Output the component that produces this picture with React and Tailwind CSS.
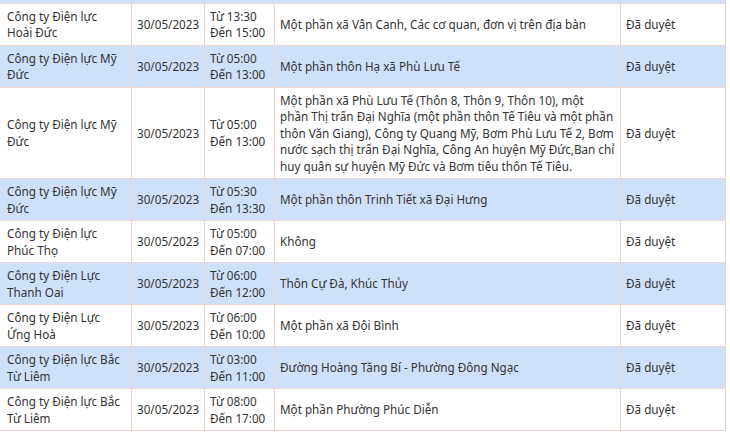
import React from "react";

const rows = [
  {
    unit: ["Công ty Điện lực", "Hoài Đức"],
    time: ["Từ 13:30", "Đến 15:00"],
    area: ["Một phần xã Vân Canh, Các cơ quan, đơn vị trên địa bàn"],
  },
  {
    unit: ["Công ty Điện lực Mỹ", "Đức"],
    time: ["Từ 05:00", "Đến 13:00"],
    area: ["Một phần thôn Hạ xã Phù Lưu Tế"],
  },
  {
    unit: ["Công ty Điện lực Mỹ", "Đức"],
    time: ["Từ 05:00", "Đến 13:00"],
    area: [
      "Một phần xã Phù Lưu Tế (Thôn 8, Thôn 9, Thôn 10), một",
      "phần Thị trấn Đại Nghĩa (một phần thôn Tế Tiêu và một phần",
      "thôn Văn Giang), Công ty Quang Mỹ, Bơm Phù Lưu Tế 2, Bơm",
      "nước sạch thị trấn Đại Nghĩa, Công An huyện Mỹ Đức,Ban chỉ",
      "huy quân sự huyện Mỹ Đức và Bơm tiêu thôn Tế Tiêu.",
    ],
  },
  {
    unit: ["Công ty Điện lực Mỹ", "Đức"],
    time: ["Từ 05:30", "Đến 13:30"],
    area: ["Một phần thôn Trinh Tiết xã Đại Hưng"],
  },
  {
    unit: ["Công ty Điện lực", "Phúc Thọ"],
    time: ["Từ 05:00", "Đến 07:00"],
    area: ["Không"],
  },
  {
    unit: ["Công ty Điện Lực", "Thanh Oai"],
    time: ["Từ 06:00", "Đến 12:00"],
    area: ["Thôn Cự Đà, Khúc Thủy"],
  },
  {
    unit: ["Công ty Điện Lực", "Ứng Hoà"],
    time: ["Từ 06:00", "Đến 10:00"],
    area: ["Một phần xã Đội Bình"],
  },
  {
    unit: ["Công ty Điện lực Bắc", "Từ Liêm"],
    time: ["Từ 03:00", "Đến 11:00"],
    area: ["Đường Hoàng Tăng Bí - Phường Đông Ngạc"],
  },
  {
    unit: ["Công ty Điện lực Bắc", "Từ Liêm"],
    time: ["Từ 08:00", "Đến 17:00"],
    area: ["Một phần Phường Phúc Diễn"],
  },
];

const td = "border border-[#ead6cf] px-[5px] py-[4px] align-middle whitespace-nowrap";

function Lines({ items }) {
  return items.map((line, j) => (
    <React.Fragment key={j}>
      {j > 0 && <br />}
      {line}
    </React.Fragment>
  ));
}

export default function App() {
  return (
    <div className="w-[730px] h-[437px] overflow-hidden bg-white font-['Noto_Sans',sans-serif] text-[11.7px] leading-[16.5px] text-[#333]">
      <table className="table-fixed border-collapse w-[726px] -ml-px">
        <colgroup>
          <col className="w-[132px]" />
          <col className="w-[73px]" />
          <col className="w-[70px]" />
          <col className="w-[346px]" />
          <col className="w-[105px]" />
        </colgroup>
        <tbody>
          {/* tail of the row above, cut off by the viewport */}
          <tr className="bg-[#cfe0fb] h-[3px]">
            <td className="border-x border-[#ead6cf] p-0" />
            <td className="border-x border-[#ead6cf] p-0" />
            <td className="border-x border-[#ead6cf] p-0" />
            <td className="border-x border-[#ead6cf] p-0" />
            <td className="border-x border-[#ead6cf] p-0" />
          </tr>
          {rows.map((r, i) => (
            <tr key={i} className={i % 2 === 1 ? "bg-[#cfe0fb]" : "bg-white"}>
              <td className={`${td} pl-[7px]`}>
                <Lines items={r.unit} />
              </td>
              <td className={td}>30/05/2023</td>
              <td className={td}>
                <Lines items={r.time} />
              </td>
              <td className={td}>
                <Lines items={r.area} />
              </td>
              <td className={td}>Đã duyệt</td>
            </tr>
          ))}
        </tbody>
      </table>
    </div>
  );
}
